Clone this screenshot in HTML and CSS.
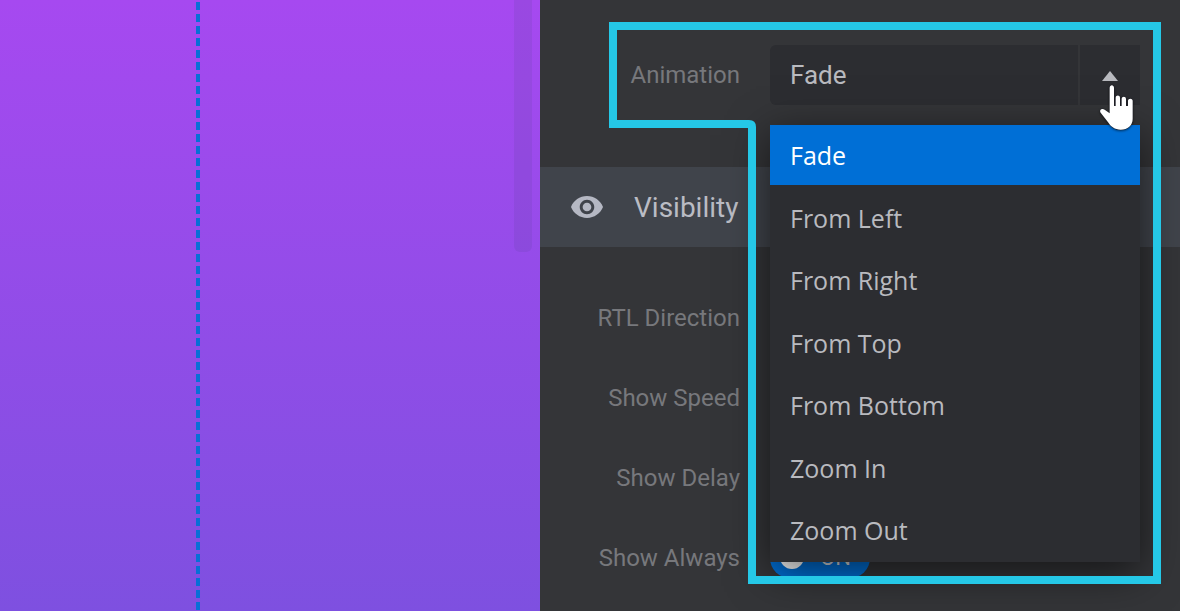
FILE: index.html
```html
<!DOCTYPE html>
<html lang="en">
<head>
    <meta charset="UTF-8">
    <meta name="viewport" content="width=device-width, initial-scale=1.0">
    <title>Slider Settings</title>
    <link rel="stylesheet" href="styles.css">
</head>
<body>
    <div class="editor">
        <main class="canvas">
            <div class="guide"></div>
            <div class="scrollbar"></div>
        </main>
        <aside class="panel">
            <div class="section section-animation">
                <div class="row">
                    <label class="label" for="animation">Animation</label>
                    <div class="dropdown">
                        <select class="dropdown-value" id="animation">
                            <option>Fade</option>
                        </select>
                        <button class="dropdown-toggle" type="button" aria-label="Toggle animation list" aria-expanded="true">
                            <span class="arrow-up"></span>
                        </button>
                        <ul class="menu">
                            <li><button class="menu-item selected" type="button">Fade</button></li>
                            <li><button class="menu-item" type="button">From Left</button></li>
                            <li><button class="menu-item" type="button">From Right</button></li>
                            <li><button class="menu-item" type="button">From Top</button></li>
                            <li><button class="menu-item" type="button">From Bottom</button></li>
                            <li><button class="menu-item" type="button">Zoom In</button></li>
                            <li><button class="menu-item" type="button">Zoom Out</button></li>
                        </ul>
                    </div>
                </div>
            </div>
            <h2 class="section-title">
                <svg class="eye" viewBox="1 4 22 16" aria-hidden="true">
                    <path d="M12 4.5C7 4.5 2.73 7.61 1 12c1.73 4.39 6 7.5 11 7.5s9.27-3.11 11-7.5c-1.73-4.39-6-7.5-11-7.5zM12 17c-2.76 0-5-2.24-5-5s2.24-5 5-5 5 2.24 5 5-2.24 5-5 5zm0-8c-1.66 0-3 1.34-3 3s1.34 3 3 3 3-1.34 3-3-1.34-3-3-3z"/>
                </svg>
                Visibility
            </h2>
            <div class="section section-visibility">
                <div class="row">
                    <label class="label" for="rtl">RTL Direction</label>
                    <input class="field" type="text" id="rtl">
                </div>
                <div class="row">
                    <label class="label" for="speed">Show Speed</label>
                    <input class="field" type="text" id="speed">
                </div>
                <div class="row">
                    <label class="label" for="delay">Show Delay</label>
                    <input class="field" type="text" id="delay">
                </div>
                <div class="row">
                    <label class="label" for="always">Show Always</label>
                    <div class="switch">
                        <input class="switch-input" type="checkbox" id="always" checked>
                        <span class="switch-text">ON</span>
                    </div>
                </div>
            </div>
            <svg class="outline" viewBox="0 0 552 562" aria-hidden="true">
                <path fill-rule="evenodd" d="M0 0H552V562H139V106H0ZM8 8V98H140Q147 98 147 105V554H544V8Z"/>
            </svg>
            <svg class="cursor" viewBox="294 220 111 147" aria-hidden="true">
                <path d="M329 234C329 224 342 224 342 234V289H347V264C347 255 360 255 360 264V289H365V268C365 259 378 259 378 268V289H384V273C384 265 398 265 398 273V327C398 347 383 360 362 360C344 360 332 350 326 340L302 309C297 301 306 295 314 300L329 311Z"/>
            </svg>
        </aside>
    </div>
</body>
</html>
```
FILE: styles.css
```css
* {
    box-sizing: border-box;
}
body {
    margin: 0;
    font-family: Roboto, sans-serif;
    background-color: #343538;
}
.editor {
    display: flex;
    min-height: 100vh;
    overflow: hidden;
}
.canvas {
    flex: 1;
    position: relative;
    background: linear-gradient(#a649f0, #7e50e0);
}
.guide {
    position: absolute;
    left: 196px;
    top: 0;
    bottom: 0;
    width: 4px;
    background: repeating-linear-gradient(transparent 0 2px, #086fd6 2px 10px, transparent 10px 12px);
}
.scrollbar {
    position: absolute;
    right: 8px;
    top: 0;
    width: 18px;
    height: 252px;
    border-radius: 0 0 6px 6px;
    background-color: rgba(90, 70, 150, 0.15);
}
.panel {
    position: relative;
    width: 640px;
    color: #b9babf;
}
.section {
    display: flex;
    flex-direction: column;
    gap: 20px;
    padding-right: 40px;
}
.section-animation {
    padding-top: 45px;
    padding-bottom: 62px;
}
.section-visibility {
    padding-top: 41px;
}
.row {
    display: grid;
    grid-template-columns: 200px 1fr;
    gap: 30px;
    align-items: center;
    height: 60px;
}
.label {
    text-align: right;
    font-size: 24px;
    color: #77787c;
}
.dropdown {
    position: relative;
    display: flex;
    gap: 2px;
    height: 60px;
}
.dropdown-value {
    flex: 1;
    appearance: none;
    padding: 0 20px;
    border: none;
    border-radius: 6px 0 0 6px;
    background-color: #2c2d31;
    color: #b9babf;
    font-family: Roboto, sans-serif;
    font-size: 26px;
}
.dropdown-toggle {
    display: flex;
    align-items: center;
    justify-content: center;
    width: 60px;
    padding: 2px 0 0;
    border: none;
    background-color: #2c2d31;
}
.arrow-up {
    border-left: 8px solid transparent;
    border-right: 8px solid transparent;
    border-bottom: 10px solid #b9babf;
}
.menu {
    position: absolute;
    z-index: 1;
    top: 80px;
    left: 0;
    right: 0;
    display: flex;
    flex-direction: column;
    justify-content: space-between;
    height: 437px;
    margin: 0;
    padding: 0 0 2px;
    list-style: none;
    background-color: #2c2d31;
    box-shadow: 0 10px 40px rgba(0, 0, 0, 0.6);
}
.menu-item {
    display: block;
    width: 100%;
    height: 60px;
    padding: 0 20px;
    border: none;
    background: none;
    color: #b9babf;
    font-family: "Open Sans", "Noto Sans", sans-serif;
    font-size: 25px;
    text-align: left;
}
.menu-item.selected {
    background-color: #006fd6;
    color: #fff;
}
.section-title {
    display: flex;
    align-items: center;
    gap: 31px;
    height: 80px;
    margin: 0;
    padding-left: 31px;
    background-color: #40444b;
    color: #babcc4;
    font-size: 28px;
    font-weight: 400;
}
.eye {
    width: 32px;
    height: 24px;
    fill: #b5b8c3;
}
.field {
    width: 100%;
    height: 60px;
    border: none;
    border-radius: 6px;
    background-color: #2c2d31;
}
.switch {
    display: flex;
    align-items: center;
    gap: 16px;
    width: 100px;
    height: 40px;
    padding: 0 0 2px 10px;
    border-radius: 20px;
    background-color: #006fd6;
    color: #ddd;
    font-size: 22px;
}
.switch-input {
    appearance: none;
    width: 24px;
    height: 24px;
    margin: 0;
    border-radius: 50%;
    background-color: #fff;
}
.outline {
    position: absolute;
    z-index: 2;
    top: 22px;
    left: 69px;
    width: 552px;
    height: 562px;
    fill: #25c8e7;
}
.cursor {
    position: absolute;
    z-index: 3;
    top: 83px;
    left: 558px;
    width: 37px;
    height: 49px;
    fill: #fff;
    stroke: #22232b;
    stroke-width: 3px;
    paint-order: stroke;
    filter: drop-shadow(0 1px 1px rgba(0, 0, 0, 0.5));
}
```
